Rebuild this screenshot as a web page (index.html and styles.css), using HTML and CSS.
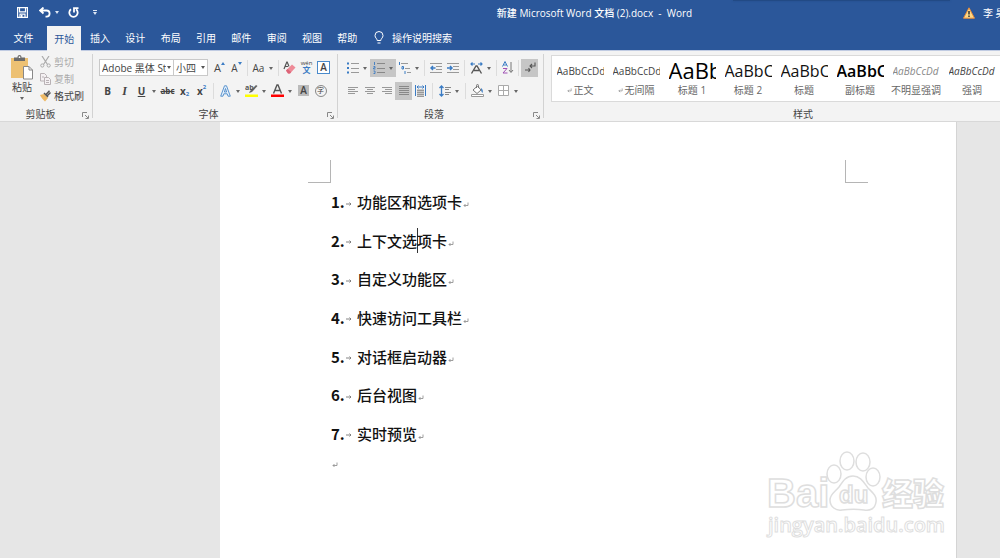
FILE: index.html
```html
<!DOCTYPE html>
<html lang="zh-CN">
<head>
<meta charset="utf-8">
<title>新建 Microsoft Word 文档 (2).docx - Word</title>
<link rel="stylesheet" href="styles.css">
</head>
<body>
<svg class="defs" aria-hidden="true">
  <symbol id="launch" viewBox="0 0 7 7"><path d="M.5 5V.5H5M3 3l3 3M6.5 3.5v3h-3" fill="none" stroke="#888"/></symbol>
  <symbol id="ret" viewBox="0 0 6 6"><path d="M5 .5V3.500H1M2.500 2 1 3.500 2.500 5" fill="none" stroke="#888" stroke-width=".8"/></symbol>
  <symbol id="arr" viewBox="0 0 6 6"><path d="M0 3h5M3.500 1.500 5 3 3.500 4.500" fill="none" stroke="#777" stroke-width=".9"/></symbol>
</svg>

<header class="titlebar">
  <div class="quick">
    <button aria-label="保存"><svg width="11" height="11" viewBox="0 0 11 11"><path d="M.6.600h9.800v9.800H.6zM2.500.6v4.200h6V.6M3 10.400V7.200h5v3.200" fill="none" stroke="#fff" stroke-width="1.200"/><path d="M4 8h1.500v2H4z" fill="#fff"/></svg></button>
    <button aria-label="撤消"><svg width="12" height="11" viewBox="0 0 12 11"><path d="M4.500.5 1.200 3.500l3.300 3M1.500 3.500H7.500a3 3 0 0 1 0 6.200H6.500" fill="none" stroke="#fff" stroke-width="1.800"/></svg></button>
    <button aria-label="撤消选项" class="mini"><svg width="4" height="3"><path d="M0 0h4L2 3z" fill="#dde6f4"/></svg></button>
    <button aria-label="重复"><svg width="11" height="11" viewBox="0 0 11 11"><path d="M3 2.300a4.200 4.200 0 1 0 5 0M6 5.500V1.200h4.500" fill="none" stroke="#fff" stroke-width="1.800"/></svg></button>
    <button aria-label="自定义快速访问工具栏" class="custom"><svg width="4" height="5"><path d="M0 0h4v1H0zM0 2h4L2 5z" fill="#dde6f4"/></svg></button>
  </div>
  <h1 class="doc-title">新建 Microsoft Word 文档 (2).docx  -  Word</h1>
  <div class="user"><svg width="12" height="12" viewBox="0 0 12 12"><path d="M6 .8 11.500 11.200H.5z" fill="#ffd985" stroke="#e88c3a"/><path d="M6 4v3.500M6 8.500V10" stroke="#333" stroke-width="1.500"/></svg><span>李 昊</span></div>
  <div class="top-shade"></div>
</header>

<nav class="tabbar">
  <button class="file">文件</button>
  <div class="tabs">
    <button class="on">开始</button><button>插入</button><button>设计</button><button>布局</button><button>引用</button><button>邮件</button><button>审阅</button><button>视图</button><button>帮助</button>
  </div>
  <button class="tell"><svg width="10" height="13" viewBox="0 0 10 13"><path d="M3.200 9.500C3.200 7.500 1 7 1 4.500a4 4 0 0 1 8 0C9 7 6.800 7.500 6.800 9.500zM3.500 12h3" fill="none" stroke="#fff"/></svg>操作说明搜索</button>
</nav>

<section class="ribbon">
  <div class="group clip">
    <div class="body">
      <button class="paste"><svg width="24" height="25" viewBox="0 0 24 25"><path d="M1 3h17v20H1z" fill="#edc173"/><path d="M4 2.500h3.500C7.500.7 8.500 0 9.500 0s2 .7 2 2.500H15V6H4z" fill="#6b6b6b"/><circle cx="9.500" cy="2.200" r=".9" fill="#fff"/><path d="M13.500 11.500h5.500l3.500 3.500v9h-9z" fill="#fff" stroke="#888"/><path d="M19 11.500V15h3.500" fill="none" stroke="#888"/></svg><span>粘贴</span><svg width="4" height="3"><path d="M0 0h4L2 3z" fill="#666"/></svg></button>
      <div class="clip-list">
        <button disabled><svg width="11" height="12" viewBox="0 0 11 12"><path d="M2 0l5.500 8.500M9 0 3.500 8.500" stroke="#aaa" stroke-width="1.200"/><circle cx="2.300" cy="9.500" r="1.600" fill="none" stroke="#aaa"/><circle cx="8.700" cy="9.500" r="1.600" fill="none" stroke="#aaa"/></svg>剪切</button>
        <button disabled><svg width="11" height="12" viewBox="0 0 11 12"><path d="M.5.500h4l2 2V8h-6z" fill="#f4f0f2" stroke="#b9b2b5"/><path d="M4.500 4.500h4l2 2v5h-6z" fill="#f4f0f2" stroke="#b9b2b5"/><path d="M6 7.500h3M6 9.500h3M2 4h2" stroke="#b9b2b5"/></svg>复制</button>
        <button><svg width="11" height="12" viewBox="0 0 11 12"><path d="M0 5l4-1 4 4-3 3.500C3 9.500 1 7.500 0 5z" fill="#edb964"/><path d="M4 3 8 7M6 4.500 9.500.8M7.500 5.500 10.500 2.500" stroke="#555" stroke-width="1.500"/></svg>格式刷</button>
      </div>
    </div>
    <footer>剪贴板<button class="launch" aria-label="剪贴板设置"><svg width="7" height="7"><use href="#launch"/></svg></button></footer>
  </div>

  <div class="group font">
    <div class="body rows">
      <div class="row">
        <div class="pick"><select class="face" aria-label="字体"><option>Adobe 黑体 Std R</option></select><svg width="4" height="3"><path d="M0 0h4L2 3z" fill="#555"/></svg></div>
        <div class="pick"><select class="size" aria-label="字号"><option>小四</option></select><svg width="4" height="3"><path d="M0 0h4L2 3z" fill="#555"/></svg></div>
        <span class="space"></span>
        <button class="tool" aria-label="增大字号"><span class="g11">A</span><svg class="sup" width="4" height="3"><path d="M0 3h4L2 0z" fill="#3b7cc4"/></svg></button>
        <button class="tool" aria-label="减小字号"><span class="g10">A</span><svg class="sup" width="4" height="3"><path d="M0 0h4L2 3z" fill="#3b7cc4"/></svg></button>
        <i class="sep"></i>
        <button class="tool drop" aria-label="更改大小写"><span class="g10">Aa</span></button>
        <i class="sep"></i>
        <button class="tool" aria-label="清除格式"><svg width="13" height="13" viewBox="0 0 13 13"><path d="M1 8 3.800 1h.4L6 5.500M2 5.500h3" fill="none" stroke="#555" stroke-width="1.200"/><path d="M3 9.500 9 3.500l3.500 3L7 12.500H5z" fill="#ee8a97"/><path d="M3 9.500l1.500-1.500L8.200 11 7 12.500H5z" fill="#dc6478"/></svg></button>
        <button class="tool pin" aria-label="拼音指南"><span>wén</span><b>文</b></button>
        <button class="tool" aria-label="字符边框"><span class="boxed">A</span></button>
      </div>
      <div class="row">
        <button class="tool" aria-label="加粗"><b class="g10">B</b></button>
        <button class="tool" aria-label="倾斜"><b class="g10 ital">I</b></button>
        <button class="tool drop" aria-label="下划线"><b class="g10 under">U</b></button>
        <button class="tool" aria-label="删除线"><b class="g8 strike">abc</b></button>
        <button class="tool" aria-label="下标"><b class="g10">x</b><span class="low">2</span></button>
        <button class="tool" aria-label="上标"><b class="g10">x</b><span class="high">2</span></button>
        <i class="sep wide"></i>
        <button class="tool drop" aria-label="文本效果"><svg width="11" height="12" viewBox="0 0 11 12"><path d="M.7 11.200 4.500.8h2l3.800 10.400H8l-.8-2.400H3.800L3 11.200zM4.400 7h2.200L5.500 3.500z" fill="#e8f1fb" stroke="#4a8acb" stroke-width=".9"/></svg></button>
        <button class="tool drop" aria-label="突出显示"><svg width="13" height="14" viewBox="0 0 13 14"><path d="M0 10.500h13V13H0z" fill="#ff0"/><path d="M4 9l1-2 6-6 1.500 1L7 8z" fill="#666"/><text x="0" y="6" class="hl">ab</text></svg></button>
        <button class="tool drop" aria-label="字体颜色"><svg width="13" height="14" viewBox="0 0 13 14"><path d="M0 10.500h13V13H0z" fill="red"/><path d="M2.500 9.500 6 1h1l3.500 8.500M4 6.500h5" fill="none" stroke="#555" stroke-width="1.400"/></svg></button>
        <button class="tool" aria-label="字符底纹"><span class="shaded">A</span></button>
        <button class="tool" aria-label="带圈字符"><span class="ring">字</span></button>
      </div>
    </div>
    <footer>字体<button class="launch" aria-label="字体设置"><svg width="7" height="7"><use href="#launch"/></svg></button></footer>
  </div>

  <div class="group para">
    <div class="body rows">
      <div class="row">
        <button class="tool drop" aria-label="项目符号"><svg width="12" height="12" viewBox="0 0 12 12"><path d="M0 1.500h2M0 6h2M0 10.500h2" stroke="#3b7cc4" stroke-width="2"/><path d="M4 1.500h8M4 6.500h8M4 10.500h8" stroke="#999"/></svg></button>
        <button class="tool drop pressed" aria-label="编号"><svg width="12" height="12" viewBox="0 0 12 12"><path d="M1.500 0v3M.5 4.500h1.500v1.500H.5v1h2M.5 9h1.500v2.500H.5" fill="none" stroke="#3b7cc4" stroke-width=".9"/><path d="M4 1.500h8M4 6.500h8M4 10.500h8" stroke="#888"/></svg></button>
        <button class="tool drop" aria-label="多级列表"><svg width="13" height="12" viewBox="0 0 13 12"><path d="M1.500 0v3M4 4.500h1.500v2.500H4zM7 9v3" fill="none" stroke="#3b7cc4"/><path d="M3 1.500h7M7 6.500h5M9 10.500h4" stroke="#999"/></svg></button>
        <i class="sep"></i>
        <button class="tool" aria-label="减少缩进"><svg width="12" height="10" viewBox="0 0 12 10"><path d="M0 .5h12M6 3.500h6M6 6.500h6M0 9.500h12" stroke="#999"/><path d="M5.500 5H1M3 3 1 5l2 2" fill="none" stroke="#3b7cc4" stroke-width="1.500"/></svg></button>
        <button class="tool" aria-label="增加缩进"><svg width="12" height="10" viewBox="0 0 12 10"><path d="M0 .5h12M6 3.500h6M6 6.500h6M0 9.500h12" stroke="#999"/><path d="M0 5h4.500M3 3l2 2-2 2" fill="none" stroke="#3b7cc4" stroke-width="1.500"/></svg></button>
        <i class="sep wide"></i>
        <button class="tool drop" aria-label="中文版式"><svg width="13" height="12" viewBox="0 0 13 12"><path d="M1.500 11.500 6 4h1l4.500 7.500M4 8.500h5" fill="none" stroke="#555" stroke-width="1.400"/><path d="M5 2H1M2.500.5 1 2l1.500 1.500M8 2h4M10.500.5 12 2l-1.500 1.500" fill="none" stroke="#3b7cc4" stroke-width="1.200"/></svg></button>
        <i class="sep"></i>
        <button class="tool" aria-label="排序"><svg width="12" height="13" viewBox="0 0 12 13"><path d="M.5 5.500 3 .5l2.500 5M1.500 4h3" fill="none" stroke="#3b7cc4"/><path d="M1 7.500h4L1 12h4.500" fill="none" stroke="#a052b5"/><path d="M9 1v10M7 9l2 2.500L11 9" fill="none" stroke="#777"/></svg></button>
        <i class="sep"></i>
        <button class="tool pressed" aria-label="显示编辑标记"><svg width="12" height="11" viewBox="0 0 12 11"><path d="M11 .5V4H6M8 2 6 4l2 2M1 8h5M4.500 6.200 6 8 4.500 9.800" fill="none" stroke="#555" stroke-width="1.100"/></svg></button>
      </div>
      <div class="row">
        <button class="tool" aria-label="左对齐"><svg width="10" height="8"><path d="M0 .5h10M0 2.500h7M0 4.500h10M0 6.500h7" stroke="#999"/></svg></button>
        <button class="tool" aria-label="居中"><svg width="10" height="8"><path d="M0 .5h10M2 2.500h6M0 4.500h10M2 6.500h6" stroke="#999"/></svg></button>
        <button class="tool" aria-label="右对齐"><svg width="10" height="8"><path d="M0 .5h10M3 2.500h7M0 4.500h10M3 6.500h7" stroke="#999"/></svg></button>
        <button class="tool pressed" aria-label="两端对齐"><svg width="10" height="10"><path d="M0 .5h10M0 2.500h10M0 4.500h10M0 6.500h10M0 8.500h10" stroke="#888"/></svg></button>
        <button class="tool" aria-label="分散对齐"><svg width="11" height="12" viewBox="0 0 11 12"><path d="M2 4h7v8H2z" fill="#c9c9c9"/><path d="M.5 0v11M10.500 0v11M2 2h7M3.500.5 2 2l1.500 1.500M7.500.5 9 2 7.500 3.500" fill="none" stroke="#3b7cc4"/><path d="M2 5.500h7M2 7.500h7M2 9.500h7M2 11.500h7" stroke="#999"/></svg></button>
        <i class="sep wide"></i>
        <button class="tool drop" aria-label="行距"><svg width="12" height="12" viewBox="0 0 12 12"><path d="M2.500 1v10M.5 3l2-2 2 2M.5 9l2 2 2-2" fill="none" stroke="#3b7cc4" stroke-width="1.300"/><path d="M6 2.500h6M6 4.500h4M6 7.500h6M6 9.500h4" stroke="#888"/></svg></button>
        <i class="sep wide"></i>
        <button class="tool drop" aria-label="底纹"><svg width="13" height="13" viewBox="0 0 13 13"><path d="M2 6 6.500 2 10 6 6 9.500zM5.500 4V1.500a1 1 0 0 1 2 0V4" fill="#fff" stroke="#777"/><path d="M10 4c2 1 2 3 1.500 5-1-1-1.500-2-1.500-5z" fill="#3b7cc4"/><path d="M.5 10.500h12v2H.5z" fill="#fff" stroke="#999"/></svg></button>
        <button class="tool drop" aria-label="边框"><svg width="11" height="11"><path d="M.5.500h10v10H.5zM5.500.5v10M.5 5.500h10" fill="#fff" stroke="#aaa"/></svg></button>
      </div>
    </div>
    <footer>段落<button class="launch" aria-label="段落设置"><svg width="7" height="7"><use href="#launch"/></svg></button></footer>
  </div>

  <div class="group styles">
    <div class="gallery">
      <button><span class="pv">AaBbCcDd</span><span class="nm"><svg width="5" height="5"><use href="#ret"/></svg> 正文</span></button>
      <button><span class="pv">AaBbCcDd</span><span class="nm"><svg width="5" height="5"><use href="#ret"/></svg> 无间隔</span></button>
      <button><span class="pv h1">AaBb</span><span class="nm">标题 1</span></button>
      <button><span class="pv h2">AaBbC</span><span class="nm">标题 2</span></button>
      <button><span class="pv h2">AaBbC</span><span class="nm">标题</span></button>
      <button><span class="pv h2 strong">AaBbC</span><span class="nm">副标题</span></button>
      <button><span class="pv em pale">AaBbCcDd</span><span class="nm">不明显强调</span></button>
      <button><span class="pv em">AaBbCcDd</span><span class="nm">强调</span></button>
    </div>
    <footer>样式</footer>
  </div>
</section>

<main class="desk">
  <article class="page">
    <div class="corners"><i class="tl"></i><i class="tr"></i></div>
    <ol>
      <li><span class="no">1.</span><svg class="tab" width="6" height="6"><use href="#arr"/></svg>功能区和选项卡<svg class="end" width="6" height="6"><use href="#ret"/></svg></li>
      <li><span class="no">2.</span><svg class="tab" width="6" height="6"><use href="#arr"/></svg>上下文选<i class="cursor"></i>项卡<svg class="end" width="6" height="6"><use href="#ret"/></svg></li>
      <li><span class="no">3.</span><svg class="tab" width="6" height="6"><use href="#arr"/></svg>自定义功能区<svg class="end" width="6" height="6"><use href="#ret"/></svg></li>
      <li><span class="no">4.</span><svg class="tab" width="6" height="6"><use href="#arr"/></svg>快速访问工具栏<svg class="end" width="6" height="6"><use href="#ret"/></svg></li>
      <li><span class="no">5.</span><svg class="tab" width="6" height="6"><use href="#arr"/></svg>对话框启动器<svg class="end" width="6" height="6"><use href="#ret"/></svg></li>
      <li><span class="no">6.</span><svg class="tab" width="6" height="6"><use href="#arr"/></svg>后台视图<svg class="end" width="6" height="6"><use href="#ret"/></svg></li>
      <li><span class="no">7.</span><svg class="tab" width="6" height="6"><use href="#arr"/></svg>实时预览<svg class="end" width="6" height="6"><use href="#ret"/></svg></li>
    </ol>
    <p class="blank"><svg width="6" height="6"><use href="#ret"/></svg></p>
    <svg class="mark" width="184" height="92" viewBox="0 0 184 92">
      <g class="ink">
        <text x="3" y="56" class="bai">Bai</text>
        <ellipse cx="70" cy="23" rx="7" ry="9"/><ellipse cx="83" cy="10" rx="7" ry="9"/><ellipse cx="99" cy="11" rx="7" ry="9"/><ellipse cx="109" cy="26" rx="7" ry="9"/>
        <path d="M89 25c8 0 11 7 15 12 5 5 9 8 8 14-1 7-6 9-12 8-7-1-14-1-22 0-6 1-12-3-12-10 0-6 5-8 9-13 4-6 7-11 14-11z"/>
        <text x="75" y="52" class="du">du</text>
        <text x="118" y="54" class="jy">经验</text>
        <text x="4" y="81" class="url">jingyan.baidu.com</text>
      </g>
    </svg>
  </article>
</main>
</body>
</html>
```
FILE: styles.css
```css
* { box-sizing: border-box; }
html, body { height: 100%; }
body {
  margin: 0;
  display: flex;
  flex-direction: column;
  overflow: hidden;
  background: #e6e6e6;
  color: #444;
  font: 10px/14px "Open Sans", "Noto Sans CJK SC", sans-serif;
}
button {
  margin: 0;
  padding: 0;
  border: 0;
  background: none;
  color: inherit;
  font: inherit;
  white-space: nowrap;
}
svg { display: block; flex: none; }
.defs { position: absolute; width: 0; height: 0; }

.titlebar {
  position: relative;
  display: flex;
  align-items: center;
  height: 25px;
  flex: none;
  background: #2b579a;
  color: #fff;
}
.quick { display: flex; align-items: center; flex: none; width: 226px; padding-left: 17px; }
.quick button { margin-right: 11px; }
.quick button:nth-child(2) { margin-right: 4px; }
.quick .mini { margin-right: 9px; }
.quick .custom { margin-left: 3px; }
.doc-title { flex: 1; margin: 0; font-size: 10px; font-weight: 500; text-align: center; white-space: pre; }
.user { display: flex; align-items: center; gap: 8px; width: 37px; overflow: hidden; white-space: nowrap; }
.user span { flex: none; }
.top-shade { position: absolute; top: 0; right: 5%; width: 217px; height: 1px; background: #224a85; box-shadow: 0 0 2px #224a85; }

.tabbar { display: flex; flex: none; height: 26px; background: #2b579a; color: #fff; border-bottom: 1px solid #c0cbe2; }
.file { width: 47px; }
.tabs { display: grid; grid-template-columns: repeat(9, 1fr); width: 318px; }
.tabs .on { margin: 1px 1px -1px 0; background: #f3f3f3; color: #2b579a; }
.tell { display: flex; align-items: center; gap: 8px; padding-left: 9px; }

.ribbon { display: flex; flex: none; height: 71px; background: #f3f3f3; border-bottom: 1px solid #d8d8d8; overflow: hidden; }
.group { display: flex; flex-direction: column; justify-content: space-between; flex: none; position: relative; padding: 4px 6px 0; }
.group:not(.styles)::after { content: ""; position: absolute; right: 0; top: 3px; bottom: 3px; width: 1px; background: #d2d2d2; }
.group footer { display: flex; justify-content: center; height: 14px; color: #444; }
.launch { position: absolute; right: 4px; bottom: 2px; }
.clip { width: 93px; }
.clip footer { padding-right: 12px; }
.font { width: 245px; }
.font footer { padding-right: 14px; }
.para { width: 206px; }
.para footer { padding-right: 14px; }
.styles { flex: 1 0 517px; padding-left: 7px; }

.clip .body { display: flex; gap: 4px; }
.paste { display: flex; flex-direction: column; align-items: center; width: 30px; padding: 0 0 0 2px; }
.paste span { line-height: 14px; }
.paste svg:last-child { margin-top: 3px; }
.clip-list { display: flex; flex-direction: column; margin-top: -2px; }
.clip-list button { display: flex; align-items: center; gap: 3px; height: 17px; }
.clip-list button:disabled { color: #aaa; }

.rows { display: flex; flex-direction: column; gap: 6px; padding-top: 4px; }
.row { display: flex; align-items: center; height: 17px; }
.pick { position: relative; display: flex; }
.pick svg { position: absolute; right: 3px; top: 7px; }
.pick + .pick { margin-left: -1px; }
select { appearance: none; height: 17px; margin: 0; padding: 0 9px 0 2px; border: 1px solid #c9c9c9; border-radius: 0; background: #fff; color: #444; font: inherit; }
.face { width: 75px; padding-right: 7px; }
.size { width: 35px; }
.space { width: 3px; }
.tool { position: relative; display: flex; align-items: center; justify-content: center; width: 17px; height: 18px; flex: none; }
.drop { width: 26px; padding-right: 9px; }
.drop::after { content: ""; position: absolute; right: 3px; top: 8px; border: 2px solid transparent; border-top: 3px solid #666; border-bottom: 0; }
.pressed { background: #c6c6c6; }
.sep { width: 1px; height: 16px; margin: 0 2px; background: #dcdcdc; flex: none; }
.sep.wide { margin: 0 3px; }
.g11 { font-size: 11px; }
.g10 { font-size: 10px; }
.g8 { font-size: 8px; }
.sup { align-self: flex-start; margin-top: 3px; }
.ital { font-style: italic; font-family: "Liberation Serif", serif; font-size: 12px; }
.under { text-decoration: underline; }
.strike { text-decoration: line-through; }
.low, .high { font-size: 6px; color: #3b7cc4; font-weight: 700; }
.low { padding-top: 6px; }
.high { padding-bottom: 8px; }
.pin { flex-direction: column; font-size: 6px; line-height: 5px; }
.pin b { color: #3b7cc4; font-size: 8px; line-height: 8px; }
.boxed { width: 13px; height: 13px; border: 1px solid #4a8acb; background: #fff; font-size: 10px; line-height: 11px; font-weight: 600; }
.shaded { width: 11px; height: 11px; background: #bbb; line-height: 11px; font-weight: 600; }
.ring { width: 12px; height: 12px; border: 1px solid #888; border-radius: 50%; font-size: 7px; line-height: 9px; }
.hl { font: 700 7px "Open Sans", sans-serif; fill: #555; }

.gallery { display: flex; width: 100%; height: 47px; background: #fff; border: 1px solid #dadada; overflow: hidden; }
.gallery button { display: flex; flex-direction: column; align-items: center; width: 56px; flex: none; padding-top: 3px; }
.pv { width: 47px; height: 24px; line-height: 25px; overflow: hidden; text-align: left; color: #444; font-size: 10px; }
.pv.h1 { font-size: 22px; font-weight: 500; line-height: 22px; color: #000; }
.pv.h2 { font-size: 16px; color: #111; }
.pv.strong { font-weight: 600; color: #000; }
.pv.em { font-style: italic; }
.pv.pale { color: #888; }
.nm { display: flex; align-items: center; gap: 2px; color: #666; }

.desk { flex: 1; display: flex; padding: 0 43px 0 220px; background: #e6e6e6; }
.page { position: relative; flex: 1; background: #fff; border-right: 1px solid #d4d4d4; padding: 38px 88px 0; color: #111; font-family: "Noto Sans CJK SC", sans-serif; }
.corners { display: flex; justify-content: space-between; }
.corners i { width: 23px; height: 23px; border-bottom: 1px solid #b5b5b5; }
.tl { border-right: 1px solid #b5b5b5; }
.tr { border-left: 1px solid #b5b5b5; }
ol { display: grid; grid-auto-rows: 1fr; height: 270px; margin: 0; padding: 0 0 0 23px; list-style: none; }
li { display: flex; align-items: center; font-size: 15px; font-weight: 500; }
.no { width: 15px; font-weight: 600; }
.tab { margin: 3px 5px 0 0; }
.end { margin: 6px 0 0 1px; }
.cursor { width: 1px; height: 25px; margin-right: -1px; background: #333; }
.blank { margin: 9px 0 0; padding-left: 24px; }
.mark { position: absolute; right: 8px; bottom: 15px; }
.ink { fill: #fff; stroke: #dedede; stroke-width: 1.500; font-family: "Liberation Sans", "Noto Sans CJK SC", sans-serif; font-weight: 700; }
.bai { font-size: 40px; }
.du { font-size: 24px; }
.jy { font-size: 31px; font-weight: 900; }
.url { font-family: "Open Sans", sans-serif; font-size: 20px; font-weight: 600; stroke-width: 1; }
```
